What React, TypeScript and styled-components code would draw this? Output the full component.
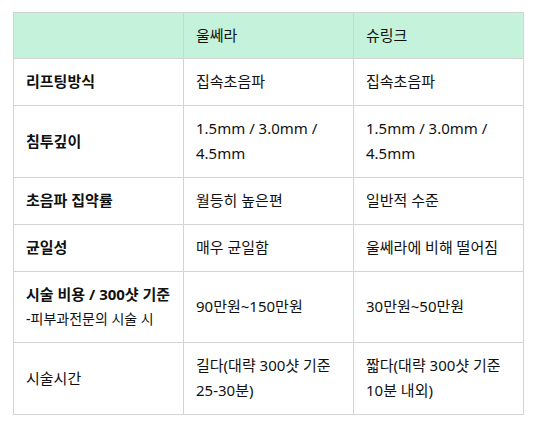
import React from "react";
import styled, { createGlobalStyle } from "styled-components";

const Global = createGlobalStyle`
  html, body { margin: 0; padding: 0; background: #fff; }
  body { font-family: "Noto Sans", "Noto Sans CJK KR", sans-serif; color: #111; }
`;

const Wrap = styled.div`
  padding: 12px 0 0 13px;
`;

const Table = styled.table`
  border-collapse: collapse;
  table-layout: fixed;
  width: 511px;
  font-size: 15px;
  line-height: 25px;
`;

const HeadCell = styled.th`
  background: #c4f2da;
  border: 1px solid #d3d3d3;
  font-weight: 400;
  text-align: left;
  padding: 10px 10px 10px 12px;
  height: 25px;
`;

const Cell = styled.td<{ $bold?: boolean }>`
  border: 1px solid #d3d3d3;
  padding: 10px 10px 11px 12px;
  vertical-align: middle;
  font-weight: ${(p) => (p.$bold ? 700 : 400)};
`;

const Line = styled.span`
  display: block;
  white-space: nowrap;
`;

const Sub = styled.span`
  display: block;
  font-weight: 400;
  font-size: 14px;
  line-height: 24px;
  white-space: nowrap;
`;

type Row = { label: React.ReactNode; bold: boolean; a: string; b: string };

const rows: Row[] = [
  { label: "리프팅방식", bold: true, a: "집속초음파", b: "집속초음파" },
  { label: "침투깊이", bold: true, a: "1.5mm / 3.0mm / 4.5mm", b: "1.5mm / 3.0mm / 4.5mm" },
  { label: "초음파 집약률", bold: true, a: "월등히 높은편", b: "일반적 수준" },
  { label: "균일성", bold: true, a: "매우 균일함", b: "울쎄라에 비해 떨어짐" },
  {
    label: (
      <>
        <Line>시술 비용 / 300샷 기준</Line>
        <Sub>-피부과전문의 시술 시</Sub>
      </>
    ),
    bold: true,
    a: "90만원~150만원",
    b: "30만원~50만원",
  },
  { label: "시술시간", bold: false, a: "길다(대략 300샷 기준 25-30분)", b: "짧다(대략 300샷 기준 10분 내외)" },
];

export default function App() {
  return (
    <>
      <Global />
      <Wrap>
        <Table>
          <thead>
            <tr>
              <HeadCell></HeadCell>
              <HeadCell>울쎄라</HeadCell>
              <HeadCell>슈링크</HeadCell>
            </tr>
          </thead>
          <tbody>
            {rows.map((r, i) => (
              <tr key={i}>
                <Cell $bold={r.bold}>{r.label}</Cell>
                <Cell>{r.a}</Cell>
                <Cell>{r.b}</Cell>
              </tr>
            ))}
          </tbody>
        </Table>
      </Wrap>
    </>
  );
}
